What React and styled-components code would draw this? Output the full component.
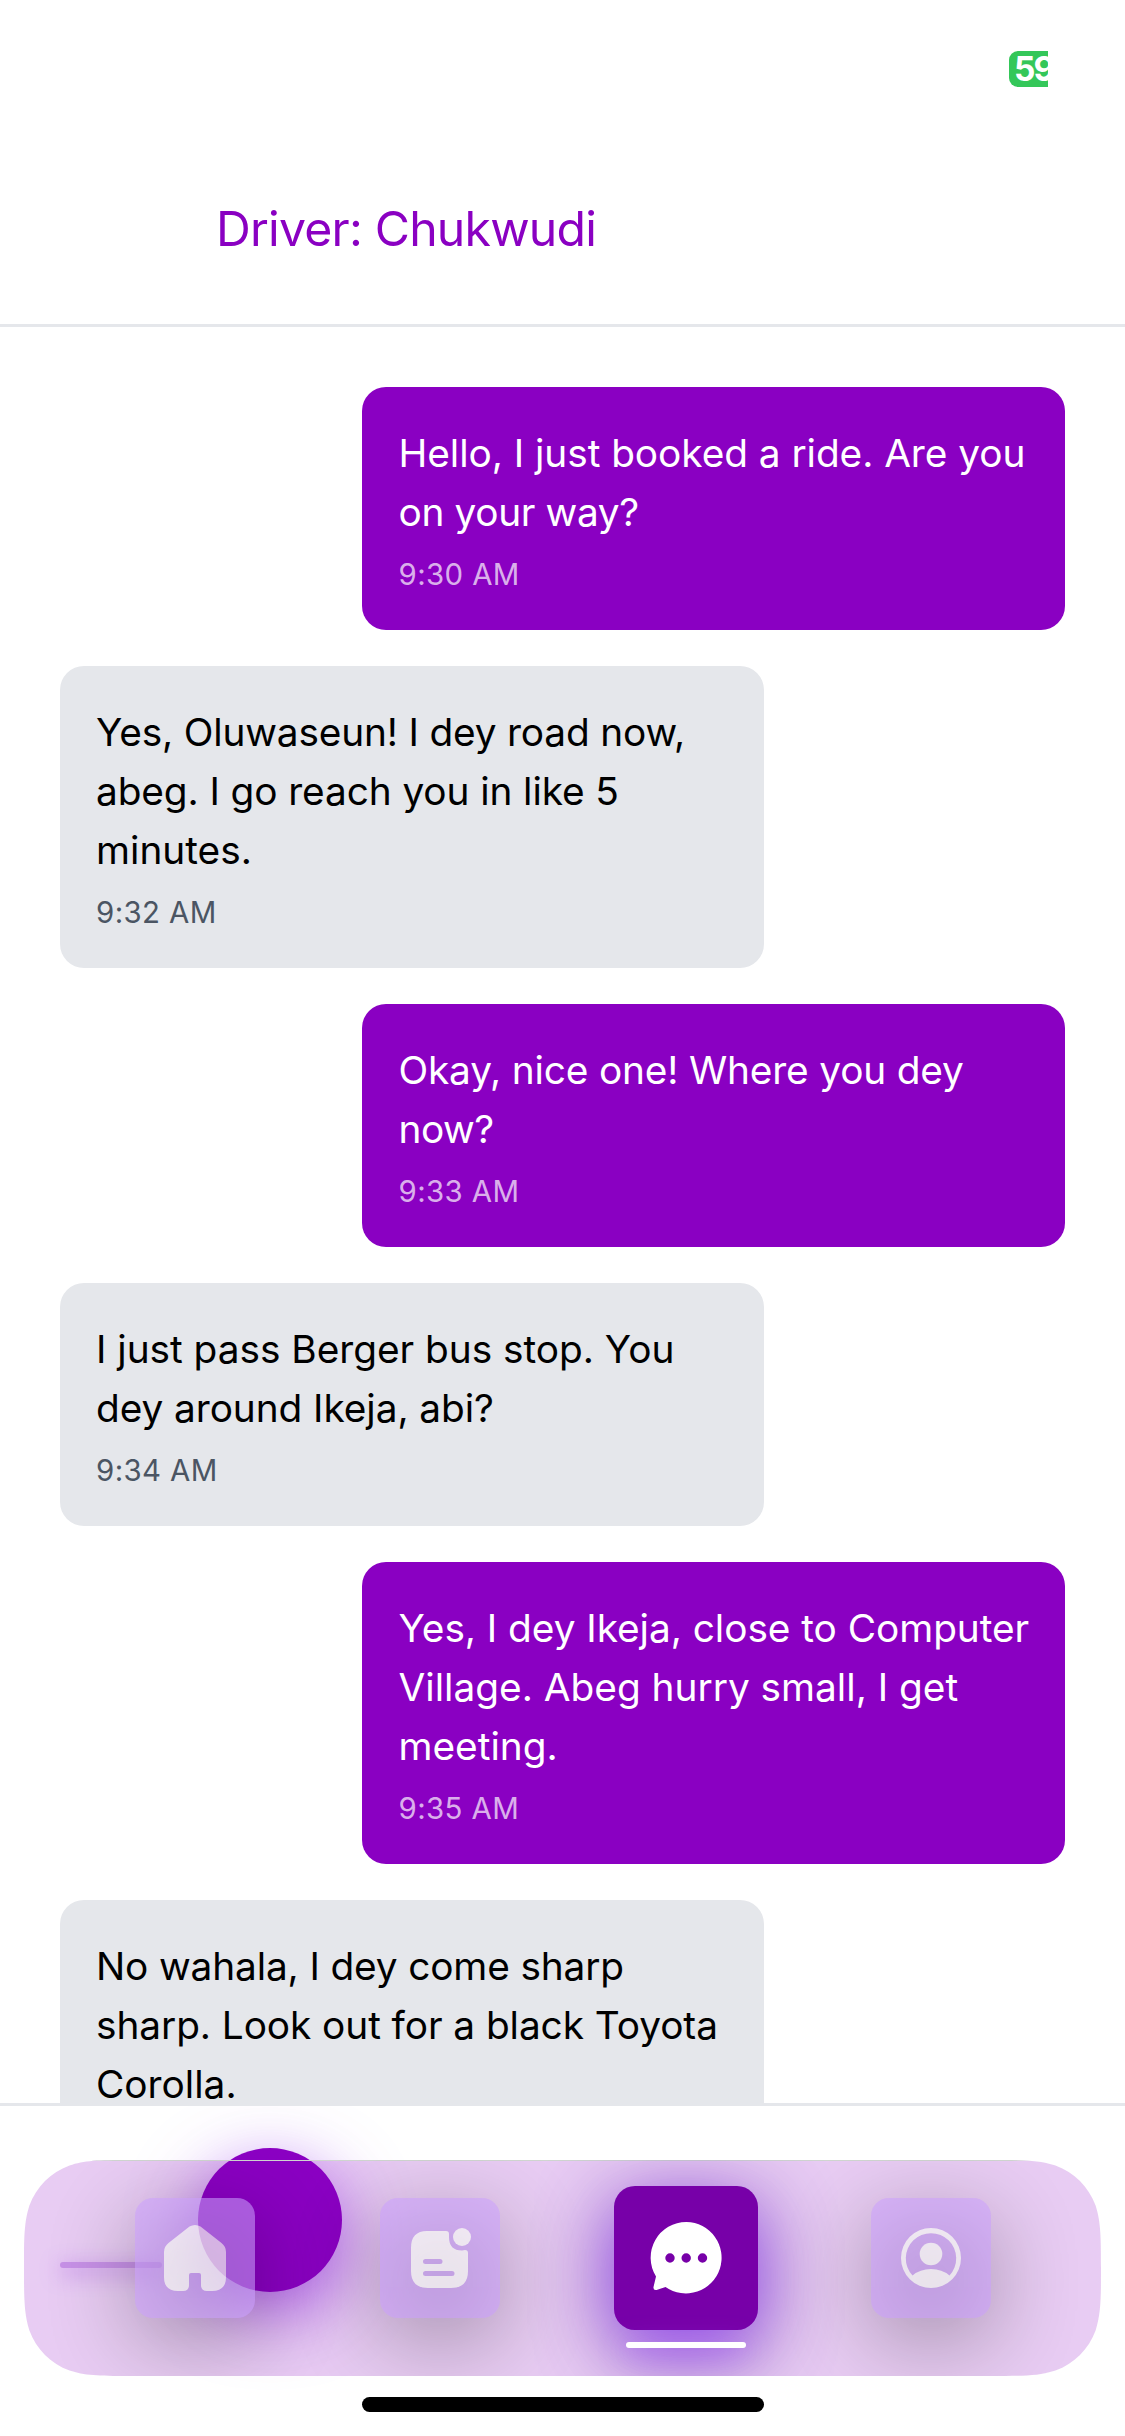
import React from 'react';
import styled, { createGlobalStyle, css } from 'styled-components';

const Global = createGlobalStyle`
  * { box-sizing: border-box; }
  body { margin: 0; background: #fff; font-family: Inter, "Liberation Sans", sans-serif; }
`;

const Screen = styled.main`
  width: 1125px;
  height: 2436px;
  display: flex;
  flex-direction: column;
  overflow: hidden;
  background: #fff;
`;

const StatusBar = styled.div`
  height: 132px;
  flex: none;
  display: flex;
  justify-content: flex-end;
  align-items: flex-start;
  padding: 51px 77px 0 0;
`;

const Battery = styled.div`
  width: 39px;
  height: 36px;
  padding-left: 5px;
  border-radius: 9px 0 0 9px;
  overflow: hidden;
  background: #34c759;
  color: #fff;
  font-size: 33.5px;
  font-weight: 700;
  line-height: 37px;
  letter-spacing: -2px;
  white-space: nowrap;
`;

const Header = styled.header`
  height: 195px;
  flex: none;
  padding: 59px 216px 0;
  border-bottom: 3px solid #e5e7eb;
`;

const Title = styled.h1`
  margin: 0;
  font-size: 48.2px;
  font-weight: 390;
  line-height: 76px;
  letter-spacing: -0.8px;
  white-space: nowrap;
  color: #8a00c2;
`;

const Thread = styled.section`
  height: 1779px;
  flex: none;
  padding: 60px 60px 0;
  display: flex;
  flex-direction: column;
  gap: 36px;
  overflow: hidden;
  background: linear-gradient(#e5e7eb, #e5e7eb) bottom / 100% 3px no-repeat;
`;

const Bubble = styled.article`
  width: 703.5px;
  flex: none;
  padding: 36px 0 36px 36px;
  border-radius: 24px;
  ${(p) => p.$mine
    ? css`align-self: flex-end; padding-left: 37px; background: #8a00c2; color: #fff; --time: rgba(255, 255, 255, 0.7);`
    : css`align-self: flex-start; background: #e5e7eb; color: #000; --time: #4b5563;`}
`;

const Line = styled.p`
  margin: 0;
  font-size: 38.8px;
  font-weight: 385;
  line-height: 59px;
  letter-spacing: ${(p) => p.$tracking}px;
  white-space: nowrap;
`;

const Time = styled.time`
  display: block;
  margin-top: 11px;
  height: 42px;
  font-size: 29.4px;
  font-weight: 385;
  line-height: 45px;
  letter-spacing: 0.4px;
  color: var(--time);
`;

const Footer = styled.footer`
  position: relative;
  flex: 1;
  padding: 54px 24px 0;
  overflow: hidden;
`;

const Fab = styled.div`
  position: absolute;
  left: 198px;
  top: 42px;
  width: 144px;
  height: 144px;
  border-radius: 50%;
  background: #8a00c2;
  box-shadow: 0 20px 68px rgba(147, 51, 234, 0.72);
`;

const Track = styled.div`
  position: absolute;
  left: 60px;
  top: 156px;
  width: 102px;
  height: 6px;
  border-radius: 3px;
  background: #d6b6f0;
  box-shadow: 0 5px 20px rgba(147, 51, 234, 0.55);
`;

const TabBar = styled.nav`
  position: relative;
  height: 216px;
  display: flex;
  background: rgba(138, 0, 194, 0.2);
  clip-path: path("M 110 0 L 967 0 C 998.6 0 1014.5 0 1028.8 4.7 L 1031.5 5.4 C 1050.2 12.2 1064.8 26.8 1071.6 45.5 C 1077 62.5 1077 78.4 1077 108 C 1077 137.6 1077 153.5 1071.6 170.5 C 1064.8 189.2 1050.2 203.800 1031.5 210.6 L 1028.8 211.3 C 1014.5 216 998.6 216 967 216 L 110 216 C 78.4 216 62.5 216 48.2 211.3 L 45.5 210.6 C 26.8 203.800 12.2 189.2 5.4 170.5 C 0 153.5 0 137.6 0 108 C 0 78.4 0 62.5 5.4 45.5 C 12.2 26.8 26.8 12.2 45.5 5.4 L 48.2 4.7 C 62.5 0 78.4 0 110 0 Z");
  border-top: 1px solid #d0d5d0;
  padding: 0 48.3px;
`;

const Tab = styled.button`
  width: 245.3px;
  height: 215px;
  padding: ${(p) => (p.$active ? 25 : 37)}px 0 0;
  display: flex;
  flex: none;
  flex-direction: column;
  align-items: center;
  gap: 12px;
  border: 0;
  background: none;
`;

const Lifted = styled.span`
  position: relative;
  flex: none;

  &::before {
    content: "";
    position: absolute;
    z-index: -1;
    inset: 0;
    border-radius: 18px;
    background: #000;
    opacity: 0.3;
    transform: translateY(22px);
    filter: blur(45px);
  }
`;

const Tile = styled.span`
  display: flex;
  align-items: center;
  justify-content: center;
  color: #fff;
  ${(p) => p.$active
    ? css`
      width: 144px; height: 144px; border-radius: 21px; background: #7700a8;
      box-shadow: 0 18px 72px rgba(147, 61, 255, 0.85);`
    : css`
      width: 120px; height: 120px; border-radius: 18px; background: rgba(204, 160, 254, 0.8); opacity: 0.7;`}
`;

const Underline = styled.span`
  position: relative;
  width: 120px;
  height: 6px;
  border-radius: 3px;
  background: #fff;
  box-shadow: 0 6px 28px rgba(168, 85, 255, 0.75);
`;

const Glyph = styled.svg`
  display: block;
  fill: currentColor;
`;

const HomeIndicator = styled.div`
  width: 402px;
  height: 15px;
  margin: 21px 0 0 338px;
  border-radius: 8px;
  background: #000;
`;

const HomeIcon = () => (
  <Glyph width="120" height="120" viewBox="0 0 120 120">
    <path d="M54.500 28.500Q60 25.500 65.500 28.500L86.500 45Q91 48.500 91 54V79Q91 93 77 93H72Q66 93 66 87V77Q66 75 64 75H56Q54 75 54 77V87Q54 93 48 93H43Q29 93 29 79V54Q29 48.500 33.500 45Z" />
  </Glyph>
);

const NoteIcon = () => (
  <Glyph width="120" height="120" viewBox="0 0 120 120">
    <path fillRule="evenodd" d="M47 33H66Q69 33 69 36V39Q69 52.500 82 52.500L85 52Q88 52 88 55V73Q88 90 71 90H48Q31 90 31 73V50Q31 33 47 33ZM45.500 61A2.500 2.500 0 0 0 45.500 66H60A2.500 2.500 0 0 0 60 61ZM45.500 73A2.500 2.500 0 0 0 45.500 78H72A2.500 2.500 0 0 0 72 73Z" />
    <circle cx="82" cy="39" r="9" />
  </Glyph>
);

const ChatIcon = () => (
  <Glyph width="144" height="144" viewBox="0 0 144 144">
    <path fillRule="evenodd" d="M72.500 36A35.700 35.700 0 1 1 51.500 101L42.500 104Q39 104.500 39.500 101L42 90.500A35.700 35.700 0 0 1 72.500 36ZM56 67.300a4.700 4.700 0 1 0 0 9.400a4.700 4.700 0 0 0 0-9.400ZM72.200 67.300a4.700 4.700 0 1 0 0 9.400a4.700 4.700 0 0 0 0-9.400ZM88.500 67.300a4.700 4.700 0 1 0 0 9.400a4.700 4.700 0 0 0 0-9.400Z" />
  </Glyph>
);

const ProfileIcon = () => (
  <Glyph width="120" height="120" viewBox="0 0 120 120">
    <path fillRule="evenodd" d="M60 30a30 30 0 1 0 0 60a30 30 0 0 0 0-60ZM41.500 77.500A25.200 25.200 0 1 1 78.500 77.500Q71 71 60 71T41.500 77.500Z" />
    <circle cx="60" cy="56" r="11.300" />
  </Glyph>
);

const messages = [
  { mine: true, time: '9:30 AM', lines: [['Hello, I just booked a ride. Are you', -0.05], ['on your way?', -0.35]] },
  { mine: false, time: '9:32 AM', lines: [['Yes, Oluwaseun! I dey road now,', -0.17], ['abeg. I go reach you in like 5', -0.1], ['minutes.', 0]] },
  { mine: true, time: '9:33 AM', lines: [['Okay, nice one! Where you dey', -0.17], ['now?', -0.5]] },
  { mine: false, time: '9:34 AM', lines: [['I just pass Berger bus stop. You', -0.02], ['dey around Ikeja, abi?', -0.07]] },
  { mine: true, time: '9:35 AM', lines: [['Yes, I dey Ikeja, close to Computer', -0.04], ['Village. Abeg hurry small, I get', 0], ['meeting.', 0]] },
  { mine: false, lines: [['No wahala, I dey come sharp', -0.14], ['sharp. Look out for a black Toyota', -0.07], ['Corolla.', 0]] },
];

const tabs = [
  { id: 'home', Icon: HomeIcon },
  { id: 'activity', Icon: NoteIcon },
  { id: 'chat', Icon: ChatIcon, active: true },
  { id: 'profile', Icon: ProfileIcon },
];

export default function App() {
  return (
    <Screen>
      <Global />
      <StatusBar><Battery>59</Battery></StatusBar>
      <Header><Title>Driver: Chukwudi</Title></Header>
      <Thread>
        {messages.map((m) => (
          <Bubble key={m.lines[0][0]} $mine={m.mine}>
            {m.lines.map(([text, tracking]) => <Line key={text} $tracking={tracking}>{text}</Line>)}
            {m.time && <Time>{m.time}</Time>}
          </Bubble>
        ))}
      </Thread>
      <Footer>
        <Fab />
        <Track />
        <TabBar>
          {tabs.map(({ id, Icon, active }) => (
            <Tab key={id} $active={active}>
              <Lifted><Tile $active={active}><Icon /></Tile></Lifted>
              {active && <Underline />}
            </Tab>
          ))}
        </TabBar>
        <HomeIndicator />
      </Footer>
    </Screen>
  );
}
